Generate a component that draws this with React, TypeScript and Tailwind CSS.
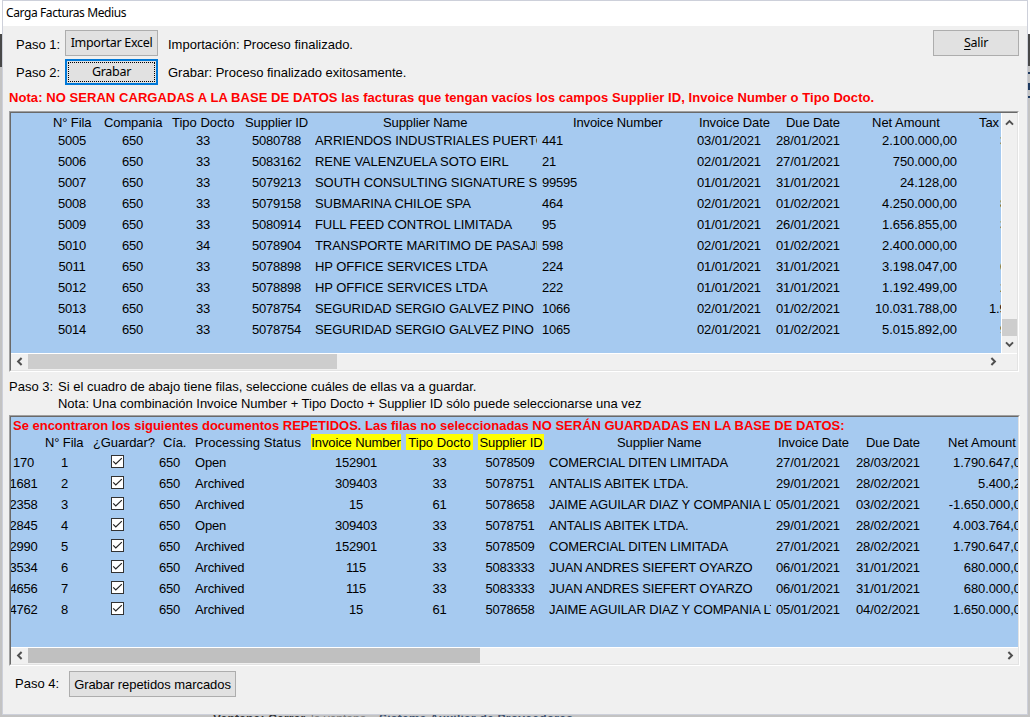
import type { ReactNode } from "react";

type Invoice = [string, string, string, string, string, string, string, string, string, string];

const invoices: Invoice[] = [
  ["5005", "650", "33", "5080788", "ARRIENDOS INDUSTRIALES PUERTO", "441", "03/01/2021", "28/01/2021", "2.100.000,00", "3"],
  ["5006", "650", "33", "5083162", "RENE VALENZUELA SOTO EIRL", "21", "02/01/2021", "27/01/2021", "750.000,00", ""],
  ["5007", "650", "33", "5079213", "SOUTH CONSULTING SIGNATURE S.", "99595", "01/01/2021", "31/01/2021", "24.128,00", ""],
  ["5008", "650", "33", "5079158", "SUBMARINA CHILOE SPA", "464", "02/01/2021", "01/02/2021", "4.250.000,00", "8"],
  ["5009", "650", "33", "5080914", "FULL FEED CONTROL LIMITADA", "95", "01/01/2021", "26/01/2021", "1.656.855,00", "3"],
  ["5010", "650", "34", "5078904", "TRANSPORTE MARITIMO DE PASAJE", "598", "02/01/2021", "01/02/2021", "2.400.000,00", ""],
  ["5011", "650", "33", "5078898", "HP OFFICE SERVICES LTDA", "224", "01/01/2021", "31/01/2021", "3.198.047,00", "6"],
  ["5012", "650", "33", "5078898", "HP OFFICE SERVICES LTDA", "222", "01/01/2021", "31/01/2021", "1.192.499,00", "2"],
  ["5013", "650", "33", "5078754", "SEGURIDAD SERGIO GALVEZ PINO", "1066", "02/01/2021", "01/02/2021", "10.031.788,00", "1.9"],
  ["5014", "650", "33", "5078754", "SEGURIDAD SERGIO GALVEZ PINO", "1065", "02/01/2021", "01/02/2021", "5.015.892,00", "9"],
];

const repeated: Invoice[] = [
  ["170", "1", "650", "Open", "152901", "33", "5078509", "COMERCIAL DITEN LIMITADA", "27/01/2021|28/03/2021", "1.790.647,00"],
  ["1681", "2", "650", "Archived", "309403", "33", "5078751", "ANTALIS ABITEK LTDA.", "29/01/2021|28/02/2021", "5.400,20"],
  ["2358", "3", "650", "Archived", "15", "61", "5078658", "JAIME AGUILAR DIAZ Y COMPANIA LTDA", "05/01/2021|03/02/2021", "-1.650.000,00"],
  ["2845", "4", "650", "Open", "309403", "33", "5078751", "ANTALIS ABITEK LTDA.", "29/01/2021|28/02/2021", "4.003.764,00"],
  ["2990", "5", "650", "Archived", "152901", "33", "5078509", "COMERCIAL DITEN LIMITADA", "27/01/2021|28/02/2021", "1.790.647,00"],
  ["3534", "6", "650", "Archived", "115", "33", "5083333", "JUAN ANDRES SIEFERT OYARZO", "06/01/2021|31/01/2021", "680.000,00"],
  ["4656", "7", "650", "Archived", "115", "33", "5083333", "JUAN ANDRES SIEFERT OYARZO", "06/01/2021|31/01/2021", "680.000,00"],
  ["4762", "8", "650", "Archived", "15", "61", "5078658", "JAIME AGUILAR DIAZ Y COMPANIA LTDA", "05/01/2021|04/02/2021", "1.650.000,00"],
];

function Cell({ className, children }: { className: string; children?: ReactNode }) {
  return <div className={`flex shrink-0 whitespace-pre ${className}`}>{children}</div>;
}

function Arrow({ turn, className = "" }: { turn: string; className?: string }) {
  return (
    <svg viewBox="0 0 9 9" className={`size-[9px] shrink-0 ${turn} ${className}`}>
      <path d="M1 6.6 4.5 3.1 8 6.6" fill="none" stroke="#505050" strokeWidth="2" />
    </svg>
  );
}

function Check() {
  return (
    <svg viewBox="0 0 13 13" className="size-[13px]">
      <rect x="0.5" y="0.5" width="12" height="12" fill="#fff" stroke="#333" />
      <path d="M2.2 6.3 4.8 8.9 10.8 3.1" fill="none" stroke="#222" strokeWidth="1.2" />
    </svg>
  );
}

function Panel({ className, children }: { className: string; children: ReactNode }) {
  return (
    <div className={`shrink-0 border border-t-[#a0a0a0] border-l-[#a0a0a0] border-r-white border-b-white ${className}`}>
      <div className="flex h-full flex-col overflow-hidden border border-t-[#696969] border-l-[#696969] border-r-[#e3e3e3] border-b-[#e3e3e3]">
        {children}
      </div>
    </div>
  );
}

function InvoicesPanel() {
  return (
    <Panel className="ml-1.5 h-[261px] w-[1010px]">
      <div className="flex h-[240px] shrink-0">
        <div className="w-[990px] shrink-0 overflow-hidden bg-[#a6caf0]">
          <div className="flex h-[17px] items-center pt-0.5 leading-[17px] tracking-[-0.12px]">
            <Cell className="ml-[42px] w-[51px]">N° Fila</Cell>
            <Cell className="w-[68px]">Compania</Cell>
            <Cell className="w-[73px] tracking-[0px]">Tipo Docto</Cell>
            <Cell className="w-[138px]">Supplier ID</Cell>
            <Cell className="w-[190px]">Supplier Name</Cell>
            <Cell className="w-[126px]">Invoice Number</Cell>
            <Cell className="w-[87px]">Invoice Date</Cell>
            <Cell className="w-[86px]">Due Date</Cell>
            <Cell className="w-[107px] tracking-[0px]">Net Amount</Cell>
            <Cell className="w-[22px]">Tax</Cell>
          </div>
          {invoices.map((r) => (
            <div key={r[0]} className="flex h-[21px] items-center leading-[21px] tracking-[-0.22px]">
              <Cell className="ml-[31px] w-[60px] justify-center">{r[0]}</Cell>
              <Cell className="w-[61px] justify-center">{r[1]}</Cell>
              <Cell className="ml-px w-[78px] justify-center">{r[2]}</Cell>
              <Cell className="w-[69px] justify-center">{r[3]}</Cell>
              <Cell className="ml-[4px] w-[222px] overflow-hidden tracking-[-0.07px]">{r[4]}</Cell>
              <Cell className="ml-[5px] w-[155px]">{r[5]}</Cell>
              <Cell className="w-[79px] tracking-[-0.12px]">{r[6]}</Cell>
              <Cell className="w-[65px] tracking-[-0.12px]">{r[7]}</Cell>
              <Cell className="w-[116px] justify-end tracking-[-0.08px]">{r[8]}</Cell>
              <Cell className={`overflow-hidden ${r[9].length > 1 ? "ml-[32px] w-[12px]" : "ml-[43px] w-[1px]"}`}>{r[9]}</Cell>
            </div>
          ))}
        </div>
        <div className="flex w-4 flex-col items-center border-l border-white bg-[#f0f0f0]">
          <Arrow turn="rotate-0" className="mt-[5px]" />
          <div className="mt-[192px] h-[17px] w-[15px] bg-[#cdcdcd]" />
          <Arrow turn="rotate-180" className="mt-[4px]" />
        </div>
      </div>
      <div className="flex h-[17px] shrink-0 items-start border-t border-white bg-[#f0f0f0]">
        <Arrow turn="-rotate-90" className="mt-[3px] ml-[4px]" />
        <div className="ml-[4px] h-[15px] w-[309px] bg-[#cdcdcd]" />
        <Arrow turn="rotate-90" className="mt-[3px] ml-[652px]" />
      </div>
    </Panel>
  );
}

function RepeatedPanel() {
  return (
    <Panel className="ml-1.5 h-[251px] w-[1011px]">
      <div className="h-[230px] shrink-0 overflow-hidden bg-[#a6caf0]">
        <div className="h-[17px] pl-[2px] leading-[17px] font-bold tracking-[-0.01px] whitespace-pre text-[#ff0000]">
          Se encontraron los siguientes documentos REPETIDOS. Las filas no seleccionadas NO SERÁN GUARDADAS EN LA BASE DE DATOS:
        </div>
        <div className="flex h-4 items-center leading-[18px] tracking-[-0.12px]">
          <Cell className="ml-[34px] h-4 w-[48px]">N° Fila</Cell>
          <Cell className="h-4 w-[70px]">¿Guardar?</Cell>
          <Cell className="h-4 w-[32px]">Cía.</Cell>
          <Cell className="h-4 w-[116px] tracking-[0.07px]">Processing Status</Cell>
          <Cell className="mr-[5px] h-4 w-[90px] justify-center bg-[#ffff00]">Invoice Number</Cell>
          <Cell className="mr-[5px] h-4 w-[67px] justify-center bg-[#ffff00] tracking-[0px]">Tipo Docto</Cell>
          <Cell className="h-4 w-[66px] justify-center bg-[#ffff00]">Supplier ID</Cell>
          <Cell className="ml-[73px] h-4 w-[161px]">Supplier Name</Cell>
          <Cell className="h-4 w-[88px]">Invoice Date</Cell>
          <Cell className="h-4 w-[82px]">Due Date</Cell>
          <Cell className="h-4 w-[70px] tracking-[0px]">Net Amount</Cell>
        </div>
        <div className="pt-[2px]">
          {repeated.map((r) => (
            <div key={r[0]} className="flex h-[21px] items-center leading-[21px] tracking-[-0.22px]">
              <Cell className="w-[25px] justify-center">{r[0]}</Cell>
              <Cell className="ml-[18px] w-[21px] justify-center">{r[1]}</Cell>
              <Cell className="ml-[36px] mt-[-3px]"><Check /></Cell>
              <Cell className="ml-[35px] w-[21px] justify-center">{r[2]}</Cell>
              <Cell className="ml-[15px] w-[116px] tracking-[-0.15px]">{r[3]}</Cell>
              <Cell className="w-[90px] justify-center">{r[4]}</Cell>
              <Cell className="ml-[5px] w-[67px] justify-center">{r[5]}</Cell>
              <Cell className="ml-[4px] w-[66px] justify-center">{r[6]}</Cell>
              <Cell className="ml-[6px] w-[222px] overflow-hidden tracking-[-0.12px]">{r[7]}</Cell>
              <Cell className="ml-[5px] w-[80px] tracking-[-0.12px]">{r[8].split("|")[0]}</Cell>
              <Cell className="w-[65px] tracking-[-0.12px]">{r[8].split("|")[1]}</Cell>
              <Cell className="w-[107px] justify-end tracking-[-0.08px]">{r[9]}</Cell>
            </div>
          ))}
        </div>
      </div>
      <div className="flex h-[17px] shrink-0 items-start border-t border-white bg-[#f0f0f0]">
        <Arrow turn="-rotate-90" className="mt-[3px] ml-[4px]" />
        <div className="ml-[4px] h-[15px] w-[452px] bg-[#c0c0c0]" />
        <Arrow turn="rotate-90" className="mt-[3px] ml-[526px]" />
      </div>
    </Panel>
  );
}

const buttonBox = "flex h-[26px] shrink-0 items-center justify-center bg-[#e1e1e1] whitespace-pre";
const dialogFont = "font-['Noto_Sans',sans-serif] text-[12.5px] tracking-[-0.3px]";

export default function App() {
  return (
    <div className="flex h-[717px] w-[1030px] flex-col overflow-hidden bg-[#c3c3c3] font-['Liberation_Sans',Arial,sans-serif] text-[13px] text-black">
      <div className="flex h-[715px] shrink-0">
        <div className="w-0.5 shrink-0">
          <div className="h-[34px] bg-white" />
          <div className="h-[33px] bg-[#484848]" />
        </div>
        <div className="flex w-[1026px] shrink-0 flex-col border border-[#cdd0da] bg-[#f0f0f0]">
          <div className="h-[25px] shrink-0 bg-white pl-[3px] font-['Noto_Sans',sans-serif] text-[12px] leading-[24px] tracking-[-0.4px]">
            Carga Facturas Medius
          </div>
          <div className="mt-[4px] flex h-[26px] shrink-0 items-center">
            <span className="ml-[13px] w-[49px] pt-[3px] whitespace-pre">Paso 1:</span>
            <button className={`${buttonBox} ${dialogFont} w-[93px] border border-[#adadad] pt-px`}>Importar Excel</button>
            <span className="ml-[10px] w-[765px] pt-[3px]">Importación: Proceso finalizado.</span>
            <button className={`${buttonBox} ${dialogFont} w-[86px] border border-[#adadad] pt-px`}>
              <span className="underline underline-offset-2">S</span>alir
            </button>
          </div>
          <div className="mt-[3px] flex h-[26px] shrink-0 items-center">
            <span className="ml-[13px] w-[49px] pt-px whitespace-pre">Paso 2:</span>
            <button className={`${buttonBox} ${dialogFont} w-[93px] border-2 border-[#0078d7] p-px`}>
              <span className="flex h-full w-full items-center justify-center border border-dotted border-black">Grabar</span>
            </button>
            <span className="ml-[10px] pt-px">Grabar: Proceso finalizado exitosamente.</span>
          </div>
          <div className="mt-[4px] h-[17px] shrink-0 pl-1.5 leading-[17px] font-bold tracking-[0.062px] whitespace-pre text-[#ff0000]">
            Nota: NO SERAN CARGADAS A LA BASE DE DATOS las facturas que tengan vacíos los campos Supplier ID, Invoice Number o Tipo Docto.
          </div>
          <div className="h-[5px] shrink-0" />
          <InvoicesPanel />
          <div className="mt-[6px] flex h-[17px] shrink-0 pl-1.5 leading-[17px]">
            <span className="w-[49px] whitespace-pre">Paso 3:</span>
            <span>Si el cuadro de abajo tiene filas, seleccione cuáles de ellas va a guardar.</span>
          </div>
          <div className="mb-[3px] h-[17px] shrink-0 pl-[55px] leading-[17px] tracking-[-0.02px]">
            Nota: Una combinación Invoice Number + Tipo Docto + Supplier ID sólo puede seleccionarse una vez
          </div>
          <RepeatedPanel />
          <div className="mt-[5px] flex h-[26px] shrink-0 items-center">
            <span className="ml-[12px] w-[54px] whitespace-pre">Paso 4:</span>
            <button className={`${buttonBox} w-[167px] border border-[#adadad] pt-0.5 tracking-[-0.06px]`}>Grabar repetidos marcados</button>
          </div>
        </div>
        <div className="w-0.5 shrink-0">
          <div className="h-[34px] bg-white" />
          <div className="h-[32px] bg-[#484848]" />
          <div className="mt-[6px] h-0.5 bg-[#1f3a5f]" />
          <div className="mt-[9px] h-[7px] bg-[#1f3a5f]" />
          <div className="mt-[6px] h-0.5 bg-[#1f3a5f]" />
        </div>
      </div>
      <div className="flex h-0.5 shrink-0 overflow-hidden text-[12px] leading-[8px]">
        <b className="ml-[213px] w-[98px] tracking-[0.2px] whitespace-pre text-[#333]">Ventana: Cerrar</b>
        <span className="w-[68px] whitespace-pre text-[#777]">la ventana.</span>
        <b className="tracking-[0.25px] whitespace-pre text-[#3c506c]">Sistema Auxiliar de Proveedores</b>
      </div>
    </div>
  );
}
